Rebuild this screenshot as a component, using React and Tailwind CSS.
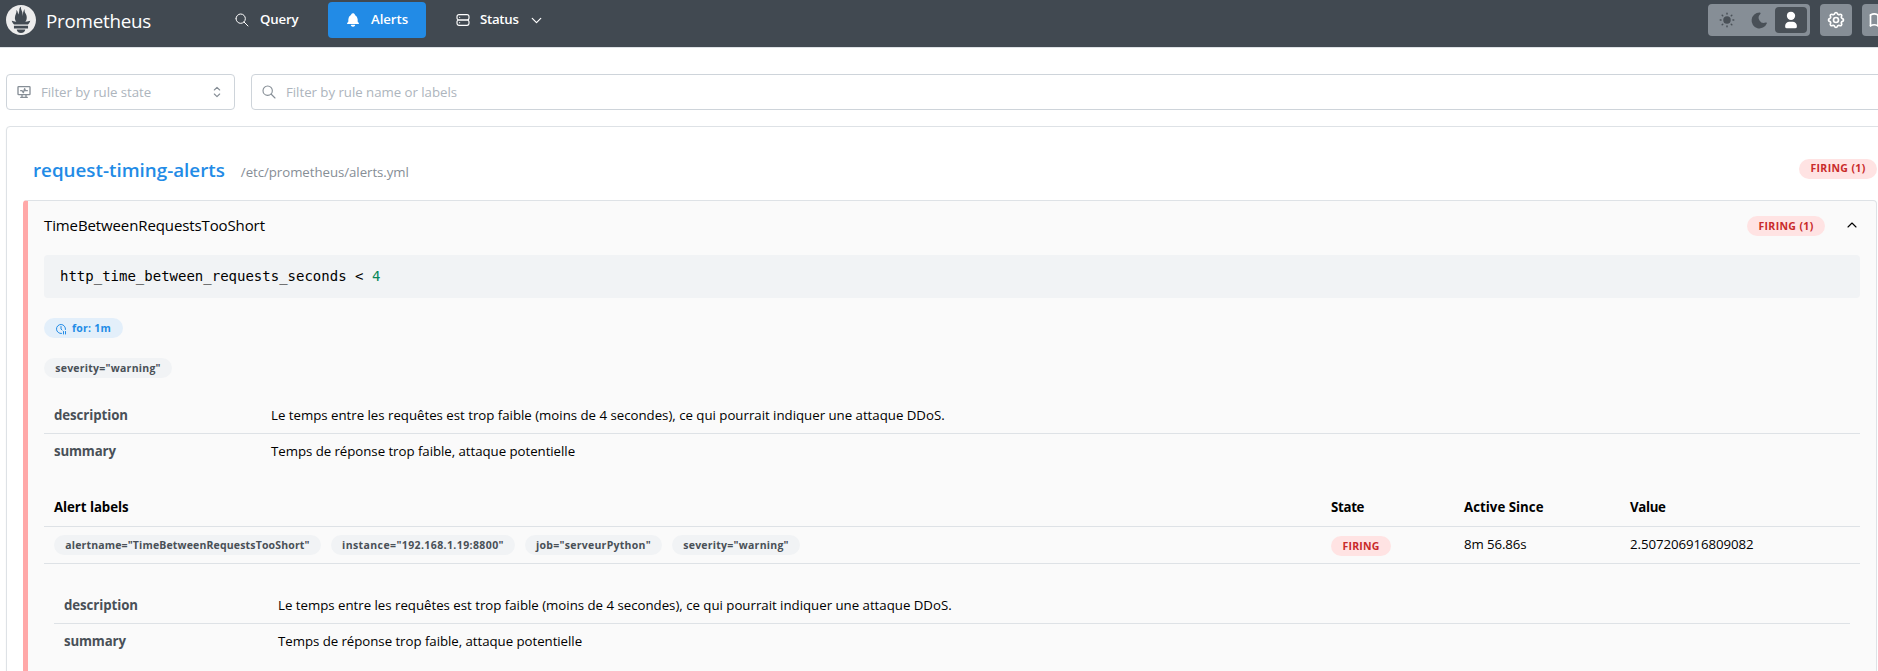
import {
  TbSearch,
  TbBellFilled,
  TbServer,
  TbChevronDown,
  TbChevronUp,
  TbSelector,
  TbHeartRateMonitor,
  TbClockPause,
  TbSunFilled,
  TbMoonFilled,
  TbUserFilled,
  TbSettings,
  TbBook,
} from "react-icons/tb";
import { SiPrometheus } from "react-icons/si";

const DESCRIPTION =
  "Le temps entre les requêtes est trop faible (moins de 4 secondes), ce qui pourrait indiquer une attaque DDoS.";
const SUMMARY = "Temps de réponse trop faible, attaque potentielle";

function Header() {
  return (
    <header className="flex h-12 shrink-0 border-b border-[#dee2e6] bg-[#414951] pl-1.5 text-white">
      <div className="flex h-10 w-[217px] items-center">
        <SiPrometheus className="size-[30px] text-[#ececec]" />
        <span className="mt-0.5 ml-2.5 text-[18.8px] tracking-[-0.25px]">Prometheus</span>
      </div>
      <nav className="flex h-10 items-center text-[13.25px] font-semibold">
        <a className="flex h-9 w-[105px] items-center pl-[11px]">
          <TbSearch size={16} strokeWidth={1.5} />
          <span className="ml-2.5 tracking-[-0.15px]">Query</span>
        </a>
        <a className="flex h-9 w-[98px] items-center rounded bg-[#228be6] pl-[17px]">
          <TbBellFilled size={16} />
          <span className="ml-2.5 tracking-[-0.08px]">Alerts</span>
        </a>
        <a className="flex h-9 items-center pl-[29px]">
          <TbServer size={16} strokeWidth={1.7} />
          <span className="ml-[9px] tracking-[-0.28px]">Status</span>
          <TbChevronDown size={17} strokeWidth={1.7} className="ml-[9px]" />
        </a>
      </nav>
      <div className="ml-auto flex h-10 w-[170px] shrink-0 items-center">
        <div className="flex h-8 w-[102px] shrink-0 items-center rounded bg-[#868e96] pl-[3px] text-[#495057]">
          <span className="flex h-[26px] w-8 items-center justify-center">
            <TbSunFilled size={18} />
          </span>
          <span className="flex h-[26px] w-8 items-center justify-center">
            <TbMoonFilled size={19} />
          </span>
          <span className="flex h-[26px] w-8 items-center justify-center rounded bg-[#495057] text-white">
            <TbUserFilled size={20} />
          </span>
        </div>
        <span className="ml-2.5 flex size-8 shrink-0 items-center justify-center rounded bg-[#868e96]">
          <TbSettings size={20} />
        </span>
        <span className="ml-2.5 flex size-8 shrink-0 items-center justify-center rounded bg-[#868e96]">
          <TbBook size={20} />
        </span>
      </div>
    </header>
  );
}

function Filters() {
  return (
    <div className="flex gap-4 text-[13.25px] text-[#adb5bd]">
      <div className="flex h-9 w-[229px] shrink-0 items-center rounded border border-[#ced4da] bg-white px-[9px]">
        <TbHeartRateMonitor size={16} className="text-[#868e96]" />
        <span className="mt-0.5 ml-[9px] tracking-[-0.05px]">Filter by rule state</span>
        <TbSelector size={16} strokeWidth={1.7} className="ml-auto text-[#868e96]" />
      </div>
      <div className="flex h-9 flex-1 items-center rounded border border-[#ced4da] bg-white pl-[9px]">
        <TbSearch size={16} strokeWidth={1.7} className="text-[#868e96]" />
        <span className="mt-0.5 ml-[9px] tracking-[-0.03px]">Filter by rule name or labels</span>
      </div>
    </div>
  );
}

function FiringBadge({ children, className }) {
  return (
    <span
      className={`flex h-5 shrink-0 items-center justify-center rounded-full bg-[#ffe3e3] pt-px text-[10.5px] font-bold text-[#c92a2a] ${className}`}
    >
      {children}
    </span>
  );
}

function LabelBadge({ children, className }) {
  return (
    <span
      className={`flex h-5 shrink-0 items-center justify-center rounded-full bg-[#f1f3f5] pt-px text-[10.5px] font-bold text-[#495057] ${className}`}
    >
      {children}
    </span>
  );
}

function Annotations({ nameClass, firstRowClass }) {
  return (
    <dl className="text-[13.25px] text-black">
      <div className={`flex items-center border-b border-[#dee2e6] pl-2.5 ${firstRowClass}`}>
        <dt className={`font-bold tracking-[-0.08px] text-[#495057] ${nameClass}`}>description</dt>
        <dd className="tracking-[-0.012px]">{DESCRIPTION}</dd>
      </div>
      <div className="flex h-9 items-center pl-2.5">
        <dt className={`font-bold tracking-[-0.15px] text-[#495057] ${nameClass}`}>summary</dt>
        <dd className="tracking-[-0.04px]">{SUMMARY}</dd>
      </div>
    </dl>
  );
}

function AlertsTable() {
  return (
    <section className="mt-5 text-[13.25px] text-black">
      <div className="flex h-[37px] items-center border-b border-[#dee2e6] pl-2.5 font-bold">
        <span className="w-[1277px] tracking-[-0.05px]">Alert labels</span>
        <span className="w-[133px] tracking-[-0.3px]">State</span>
        <span className="w-[166px] tracking-[0.02px]">Active Since</span>
        <span className="tracking-[-0.33px]">Value</span>
      </div>
      <div className="flex h-[37px] items-center border-b border-[#dee2e6] pl-2.5">
        <div className="flex w-[1277px] gap-2.5">
          <LabelBadge className="w-[267px] tracking-[0.16px]">alertname="TimeBetweenRequestsTooShort"</LabelBadge>
          <LabelBadge className="w-[184px] tracking-[0.4px]">instance="192.168.1.19:8800"</LabelBadge>
          <LabelBadge className="w-[137px] tracking-[0.27px]">job="serveurPython"</LabelBadge>
          <LabelBadge className="w-32 tracking-[0.25px]">severity="warning"</LabelBadge>
        </div>
        <div className="w-[133px]">
          <FiringBadge className="mt-0.5 w-[60px] tracking-[0.2px]">FIRING</FiringBadge>
        </div>
        <span className="w-[166px] tracking-[-0.1px]">8m 56.86s</span>
        <span className="tracking-[-0.07px]">2.507206916809082</span>
      </div>
      <div className="px-2.5 pt-6">
        <Annotations nameClass="w-[214px]" firstRowClass="h-9" />
      </div>
    </section>
  );
}

function Rule() {
  return (
    <article className="mx-4 h-[520px] rounded border border-l-[5px] border-[#dee2e6] border-l-[#ffa8a8] bg-[#fafafa] px-4">
      <div className="flex h-[54px] items-center pb-1.5">
        <h3 className="text-[15px] tracking-[-0.11px] text-black">TimeBetweenRequestsTooShort</h3>
        <FiringBadge className="mt-0.5 ml-auto w-[78px] tracking-[0.35px]">FIRING (1)</FiringBadge>
        <TbChevronUp size={16} strokeWidth={1.7} className="ml-[19px] text-black" />
      </div>
      <pre className="flex h-[43px] items-center rounded bg-[#f1f3f5] pl-4 text-[14px] text-black">
        <code className="font-['DejaVu_Sans_Mono',monospace]">
          http_time_between_requests_seconds {"<"} <span className="text-[#098658]">4</span>
        </code>
      </pre>
      <span className="mt-5 flex h-5 w-[79px] items-center rounded-full bg-[#e3effa] pt-px pl-[11px] text-[10.5px] font-bold tracking-[0.24px] text-[#228be6]">
        <TbClockPause size={12} className="mr-[5px]" />
        for: 1m
      </span>
      <LabelBadge className="mt-5 mb-[21px] w-32 tracking-[0.25px]">severity="warning"</LabelBadge>
      <Annotations nameClass="w-[217px]" firstRowClass="h-[35px]" />
      <AlertsTable />
    </article>
  );
}

export default function App() {
  return (
    <div className="flex h-[671px] w-full flex-col overflow-hidden bg-white font-['Open_Sans','Noto_Sans',sans-serif]">
      <Header />
      <main className="w-[1894px] pt-[26px] pl-1.5">
        <Filters />
        <section className="mt-4 h-[620px] rounded border border-[#dee2e6] bg-white shadow-xs">
          <div className="flex h-[73px] items-center pt-3.5 pr-4 pl-[26px]">
            <h2 className="text-[18.8px] font-semibold text-[#228be6]">request-timing-alerts</h2>
            <span className="mt-1 ml-4 text-[13.25px] tracking-[-0.05px] text-[#868e96]">/etc/prometheus/alerts.yml</span>
            <FiringBadge className="mb-1 ml-auto w-[78px] tracking-[0.35px]">FIRING (1)</FiringBadge>
          </div>
          <Rule />
        </section>
      </main>
    </div>
  );
}
